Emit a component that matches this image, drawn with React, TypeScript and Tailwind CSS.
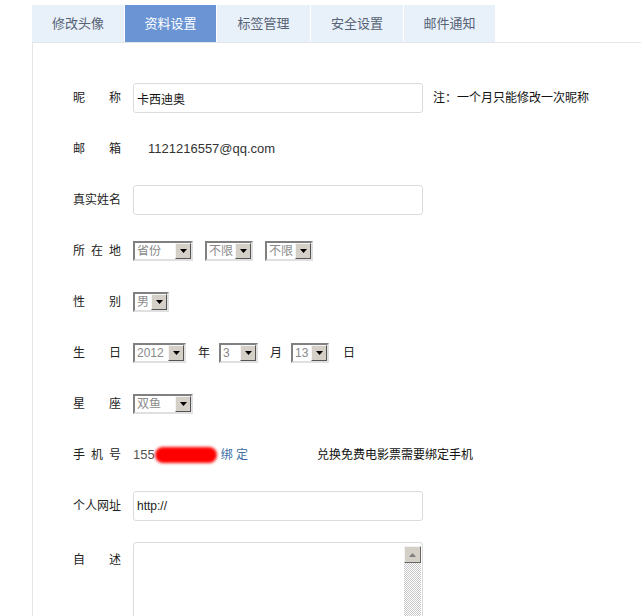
import React from 'react';

const tabs = [
  { label: '修改头像', w: 'w-[93px]' },
  { label: '资料设置', w: 'w-[92px]', active: true },
  { label: '标签管理', w: 'w-[94px]' },
  { label: '安全设置', w: 'w-[93px]' },
  { label: '邮件通知', w: 'w-[92px]' },
];

const cjk = "font-['Liberation_Sans','Noto_Sans_CJK_SC',sans-serif]";

function Label({ chars }: { chars: string[] }) {
  return (
    <div className="flex w-[48px] shrink-0 justify-between text-[12px] text-[#222]">
      {chars.map((c, i) => (
        <span key={i}>{c}</span>
      ))}
    </div>
  );
}

function Select({ value, w }: { value: string; w: string }) {
  return (
    <div
      className={`flex h-[20px] items-center border-2 border-t-[#808080] border-l-[#808080] border-b-[#e0e0e0] border-r-[#e0e0e0] bg-white ${w}`}
    >
      <span className="flex-1 truncate pl-[2px] text-[12px] leading-none text-[#8a8a8a]">{value}</span>
      <span className="flex h-[16px] w-[16px] items-center justify-center border border-t-[#f4f4f4] border-l-[#f4f4f4] border-b-[#555] border-r-[#555] bg-[#d4d0c8]">
        <svg width="7" height="4" viewBox="0 0 7 4">
          <path d="M0 0h7L3.5 4z" fill="#000" />
        </svg>
      </span>
    </div>
  );
}

function Row({ children, className = '' }: { children: React.ReactNode; className?: string }) {
  return <div className={`flex h-[30px] shrink-0 items-center ${className}`}>{children}</div>;
}

export default function App() {
  return (
    <div className={`min-h-[616px] bg-white pl-[32px] pt-[5px] ${cjk}`}>
      <div className="flex h-[37px]">
        {tabs.map((t) => (
          <div
            key={t.label}
            className={`flex items-center justify-center border-r border-white text-[13px] ${t.w} ${
              t.active ? 'bg-[#6b94d5] text-white' : 'bg-[#e8f0fa] text-[#566275]'
            }`}
          >
            {t.label}
          </div>
        ))}
      </div>
      <div className="flex h-[574px] flex-col gap-[21px] overflow-hidden border-l border-t border-[#e2e6ea] pl-[40px] pt-[40px]">
        <Row>
          <Label chars={['昵', '称']} />
          <input
            defaultValue="卡西迪奥"
            className="ml-[12px] h-[30px] w-[290px] rounded-[3px] border border-[#dcdcdc] px-[3px] text-[12px] text-[#111] outline-none"
          />
          <span className="ml-[10px] text-[12px] text-[#111]">注：一个月只能修改一次昵称</span>
        </Row>
        <Row>
          <Label chars={['邮', '箱']} />
          <span className="ml-[27px] font-['Liberation_Sans',sans-serif] text-[13px] text-[#333]">1121216557@qq.com</span>
        </Row>
        <Row>
          <Label chars={['真', '实', '姓', '名']} />
          <input className="ml-[12px] h-[30px] w-[290px] rounded-[3px] border border-[#dcdcdc] outline-none" />
        </Row>
        <Row>
          <Label chars={['所', '在', '地']} />
          <div className="ml-[12px] flex gap-[12px]">
            <Select value="省份" w="w-[60px]" />
            <Select value="不限" w="w-[48px]" />
            <Select value="不限" w="w-[48px]" />
          </div>
        </Row>
        <Row>
          <Label chars={['性', '别']} />
          <div className="ml-[12px]">
            <Select value="男" w="w-[36px]" />
          </div>
        </Row>
        <Row>
          <Label chars={['生', '日']} />
          <div className="ml-[12px] flex items-center text-[12px] text-[#222]">
            <Select value="2012" w="w-[53px]" />
            <span className="ml-[12px] mr-[9px]">年</span>
            <Select value="3" w="w-[39px]" />
            <span className="ml-[12px] mr-[9px]">月</span>
            <Select value="13" w="w-[38px]" />
            <span className="ml-[14px]">日</span>
          </div>
        </Row>
        <Row>
          <Label chars={['星', '座']} />
          <div className="ml-[12px]">
            <Select value="双鱼" w="w-[60px]" />
          </div>
        </Row>
        <Row>
          <Label chars={['手', '机', '号']} />
          <span className="ml-[12px] font-['Liberation_Sans',sans-serif] text-[13px] text-[#555]">155</span>
          <span className="h-[16px] w-[62px] rounded-full bg-[#ff0000] blur-[1.5px]" />
          <span className="ml-[4px] text-[12px] text-[#3d6fa3]">绑 定</span>
          <span className="ml-[69px] text-[12px] text-[#111]">兑换免费电影票需要绑定手机</span>
        </Row>
        <Row>
          <Label chars={['个', '人', '网', '址']} />
          <input
            defaultValue="http://"
            className="ml-[12px] h-[30px] w-[290px] rounded-[3px] border border-[#dcdcdc] px-[3px] font-['Liberation_Sans',sans-serif] text-[12px] text-[#222] outline-none"
          />
        </Row>
        <div className="flex shrink-0 items-start">
          <div className="mt-[9px]">
            <Label chars={['自', '述']} />
          </div>
          <div className="ml-[12px] flex h-[120px] w-[290px] justify-end rounded-[3px] border border-[#dcdcdc] pr-[1px] pt-[3px]">
            <div className="flex w-[17px] flex-col">
              <div className="flex h-[17px] items-center justify-center border border-t-[#f4f4f4] border-l-[#f4f4f4] border-b-[#666] border-r-[#666] bg-[#d4d0c8]">
                <svg width="7" height="4" viewBox="0 0 7 4">
                  <path d="M3.5 0L7 4H0z" fill="#808080" />
                </svg>
              </div>
              <div className="flex-1 bg-[repeating-conic-gradient(#c8c8c8_0%_25%,#ffffff_0%_50%)] bg-[length:2px_2px]" />
            </div>
          </div>
        </div>
      </div>
    </div>
  );
}
